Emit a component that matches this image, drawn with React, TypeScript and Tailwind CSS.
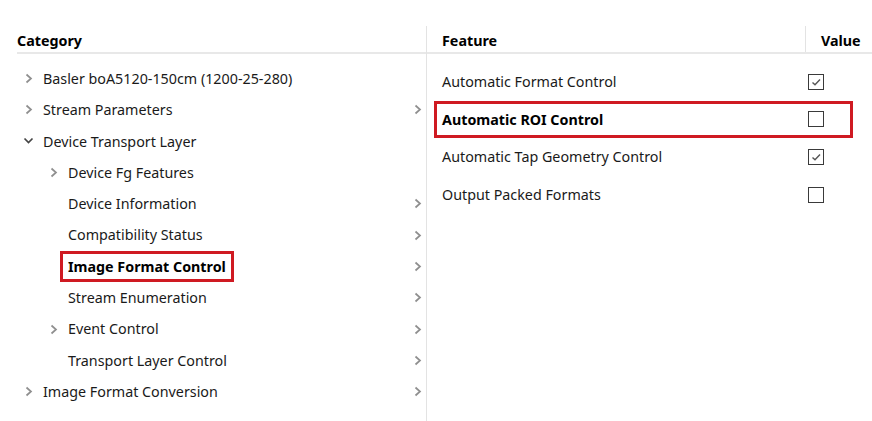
import React from "react";

type TreeItem = {
  label: string;
  level: number;
  expander?: "right" | "down";
  arrow?: boolean;
  highlight?: boolean;
};

const tree: TreeItem[] = [
  { label: "Basler boA5120-150cm (1200-25-280)", level: 1, expander: "right" },
  { label: "Stream Parameters", level: 1, expander: "right", arrow: true },
  { label: "Device Transport Layer", level: 1, expander: "down" },
  { label: "Device Fg Features", level: 2, expander: "right" },
  { label: "Device Information", level: 2, arrow: true },
  { label: "Compatibility Status", level: 2, arrow: true },
  { label: "Image Format Control", level: 2, arrow: true, highlight: true },
  { label: "Stream Enumeration", level: 2, arrow: true },
  { label: "Event Control", level: 2, expander: "right", arrow: true },
  { label: "Transport Layer Control", level: 2, arrow: true },
  { label: "Image Format Conversion", level: 1, expander: "right", arrow: true },
];

const features = [
  { label: "Automatic Format Control", checked: true },
  { label: "Automatic ROI Control", checked: false, highlight: true },
  { label: "Automatic Tap Geometry Control", checked: true },
  { label: "Output Packed Formats", checked: false },
];

const ChevronRight = () => (
  <svg width="8" height="11" viewBox="0 0 8 11" fill="none">
    <path d="M1.5 1.5 L6 5.5 L1.5 9.5" stroke="#8f8f8f" strokeWidth="1.7" />
  </svg>
);

const ChevronDown = () => (
  <svg width="11" height="8" viewBox="0 0 11 8" fill="none">
    <path d="M1.5 1.5 L5.5 5.5 L9.5 1.5" stroke="#444" strokeWidth="1.7" />
  </svg>
);

const Checkbox = ({ checked }: { checked: boolean }) => (
  <div className="w-4 h-4 border-[1.5px] border-[#3a3a3a] flex items-center justify-center bg-white">
    {checked && (
      <svg width="12" height="12" viewBox="0 0 12 12" fill="none">
        <path d="M2.5 6.5 L5 8.8 L10 3.5" stroke="#555" strokeWidth="1.4" />
      </svg>
    )}
  </div>
);

export default function App() {
  return (
    <div
      className="w-[872px] h-[421px] bg-white text-[#1a1a1a] text-[14.3px] flex pt-[26px] overflow-hidden"
      style={{ fontFamily: '"Segoe UI", "Noto Sans", "Open Sans", sans-serif' }}
    >
      {/* Category tree */}
      <div className="w-[427px] border-r border-[#e3e3e3] pl-[17px] flex flex-col">
        <div className="h-[28px] border-b-2 border-[#e8e8e8] flex items-center pt-[4px] font-bold text-black">
          Category
        </div>
        <div className="pt-[9px] flex flex-col">
          {tree.map((item) => (
            <div
              key={item.label}
              className={`h-[31.3px] flex items-center pr-[4px] ${item.level === 2 ? "pl-[25px]" : ""}`}
            >
              <div className="w-[26px] flex items-center">
                {item.expander === "right" && (
                  <span className="ml-[8px] flex">
                    <ChevronRight />
                  </span>
                )}
                {item.expander === "down" && (
                  <span className="ml-[6px] flex">
                    <ChevronDown />
                  </span>
                )}
              </div>
              {item.highlight ? (
                <span className="-ml-[8px] px-[5px] py-[3px] border-[3px] border-[#cf1a22] font-bold text-black leading-[19px]">
                  {item.label}
                </span>
              ) : (
                <span>{item.label}</span>
              )}
              <div className="flex-1" />
              {item.arrow && <ChevronRight />}
            </div>
          ))}
        </div>
      </div>

      {/* Feature list */}
      <div className="flex-1 flex flex-col">
        <div className="h-[28px] border-b-2 border-[#e8e8e8] flex font-bold text-black">
          <div className="w-[379px] pl-[15px] pt-[4px] flex items-center border-r border-[#e3e3e3]">Feature</div>
          <div className="flex-1 pl-[15px] pt-[4px] flex items-center">Value</div>
        </div>
        <div className="pt-[9px] flex flex-col">
          {features.map((f) => (
            <div
              key={f.label}
              className={`h-[37.6px] ml-[7px] w-[419px] flex items-center pl-[5px] pr-[26px] border-[3px] ${
                f.highlight ? "border-[#cf1a22] font-bold text-black" : "border-transparent"
              }`}
            >
              <span className="flex-1">{f.label}</span>
              <Checkbox checked={f.checked} />
            </div>
          ))}
        </div>
      </div>
    </div>
  );
}
